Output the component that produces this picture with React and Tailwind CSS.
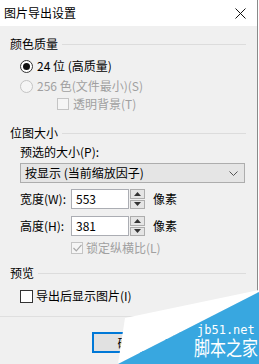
import React from "react";

const font = { fontFamily: '"Noto Sans CJK SC", "Noto Sans", sans-serif' };

function GroupLabel({ children }) {
  return (
    <div className="flex items-center h-[18px] pr-[11px]">
      <span className="text-[12px] text-black leading-none">{children}</span>
      <div className="flex-1 ml-[4px] border-t border-[#dcdcdc]" />
    </div>
  );
}

function Spin() {
  return (
    <div className="flex flex-col w-[15px] h-[20px] ml-[1px] gap-[1px]">
      <div className="flex-1 border border-[#adadad] bg-[#e5e5e5] flex items-center justify-center">
        <svg width="7" height="4" viewBox="0 0 7 4"><path d="M0 4 L3.5 0 L7 4 Z" fill="#333" /></svg>
      </div>
      <div className="flex-1 border border-[#adadad] bg-[#e5e5e5] flex items-center justify-center">
        <svg width="7" height="4" viewBox="0 0 7 4"><path d="M0 0 L3.5 4 L7 0 Z" fill="#333" /></svg>
      </div>
    </div>
  );
}

export default function App() {
  return (
    <div className="w-[259px] h-[364px] relative overflow-hidden bg-white" style={font}>
      <div className="w-[258px] h-[364px] border-r border-[#8a8a8a] bg-[#f0f0f0] flex flex-col">
        {/* title bar */}
        <div className="h-[26px] bg-white flex items-center justify-between pl-[4px] pr-[11px] shrink-0">
          <span className="text-[12px] text-black leading-none">图片导出设置</span>
          <svg width="11" height="11" viewBox="0 0 11 11">
            <path d="M0.5 0.5 L10.5 10.5 M10.5 0.5 L0.5 10.5" stroke="#111" strokeWidth="1" />
          </svg>
        </div>

        <div className="pl-[10px] pt-[9px] flex flex-col">
          <GroupLabel>颜色质量</GroupLabel>

          <div className="mt-[4px] h-[18px] flex items-center pl-[10px]">
            <div className="w-[13px] h-[13px] rounded-full border border-[#333] bg-white flex items-center justify-center">
              <div className="w-[7px] h-[7px] rounded-full bg-[#111]" />
            </div>
            <span className="ml-[4px] text-[12px] text-black leading-none">24 位 (高质量)</span>
          </div>

          <div className="mt-[2px] h-[18px] flex items-center pl-[10px]">
            <div className="w-[13px] h-[13px] rounded-full border border-[#c4c4c4] bg-[#f5f5f5]" />
            <span className="ml-[4px] text-[12px] text-[#a0a0a0] leading-none">256 色(文件最小)(S)</span>
          </div>

          <div className="h-[18px] flex items-center pl-[47px]">
            <div className="w-[12px] h-[12px] border border-[#c4c4c4] bg-[#f5f5f5]" />
            <span className="ml-[4px] text-[12px] text-[#a0a0a0] leading-none">透明背景(T)</span>
          </div>

          <div className="mt-[11px]">
            <GroupLabel>位图大小</GroupLabel>
          </div>

          <div className="mt-[1px] h-[18px] flex items-center pl-[10px]">
            <span className="text-[12px] text-black leading-none">预选的大小(P):</span>
          </div>

          <div className="mt-[2px] ml-[10px] mr-[12px] h-[20px] border border-[#adadad] bg-[#e5e5e5] flex items-center justify-between pl-[4px] pr-[6px]">
            <span className="text-[12px] text-black leading-none">按显示 (当前缩放因子)</span>
            <svg width="9" height="5" viewBox="0 0 9 5">
              <path d="M0.5 0.5 L4.5 4.5 L8.5 0.5" stroke="#555" strokeWidth="1" fill="none" />
            </svg>
          </div>

          <div className="mt-[6px] h-[20px] flex items-center pl-[10px]">
            <span className="w-[51px] text-[12px] text-black leading-none">宽度(W):</span>
            <div className="w-[58px] h-[20px] border border-[#abadb3] bg-white flex items-center pl-[4px]">
              <span className="text-[12px] text-black leading-none">553</span>
            </div>
            <Spin />
            <span className="ml-[8px] text-[12px] text-black leading-none">像素</span>
          </div>

          <div className="mt-[7px] h-[20px] flex items-center pl-[10px]">
            <span className="w-[51px] text-[12px] text-black leading-none">高度(H):</span>
            <div className="w-[58px] h-[20px] border border-[#abadb3] bg-white flex items-center pl-[4px]">
              <span className="text-[12px] text-black leading-none">381</span>
            </div>
            <Spin />
            <span className="ml-[8px] text-[12px] text-black leading-none">像素</span>
          </div>

          <div className="mt-[3px] h-[18px] flex items-center pl-[61px]">
            <div className="w-[12px] h-[12px] border border-[#c4c4c4] bg-[#f5f5f5] flex items-center justify-center">
              <svg width="9" height="8" viewBox="0 0 9 8">
                <path d="M0.5 4 L3.3 6.8 L8.5 0.8" stroke="#a8a8a8" strokeWidth="1.2" fill="none" />
              </svg>
            </div>
            <span className="ml-[3px] text-[12px] text-[#a0a0a0] leading-none">锁定纵横比(L)</span>
          </div>

          <div className="mt-[7px]">
            <GroupLabel>预览</GroupLabel>
          </div>

          <div className="mt-[5px] h-[18px] flex items-center pl-[10px]">
            <div className="w-[13px] h-[13px] border border-[#333] bg-white" />
            <span className="ml-[3px] text-[12px] text-black leading-none">导出后显示图片(I)</span>
          </div>
        </div>

        <div className="mt-[11px] border-t border-[#dfdfdf]" />

        <div className="mt-[15px] flex pl-[92px] gap-[6px]">
          <div className="w-[75px] h-[21px] border-2 border-[#0078d7] bg-[#e1e1e1] flex items-center justify-center">
            <span className="text-[12px] text-black leading-none">确定</span>
          </div>
          <div className="w-[75px] h-[21px] border border-[#adadad] bg-[#e1e1e1] flex items-center justify-center">
            <span className="text-[12px] text-black leading-none">取消</span>
          </div>
        </div>
      </div>

      {/* watermark overlay */}
      <svg className="absolute left-0 top-0" width="259" height="364" viewBox="0 0 259 364">
        <polygon points="125,318 259,290 259,292 118,364" fill="#ffffff" />
        <polygon points="118,364 259,292 259,364" fill="#38a7e0" />
      </svg>
      <div className="absolute left-[197px] top-[324px] text-[12px] leading-none text-white whitespace-nowrap" style={{ fontFamily: '"DejaVu Sans Mono", monospace' }}>
        jb51.net
      </div>
      <div className="absolute left-[194px] top-[338px] text-[20px] leading-none text-white whitespace-nowrap origin-left scale-x-80">
        脚本之家
      </div>
    </div>
  );
}
